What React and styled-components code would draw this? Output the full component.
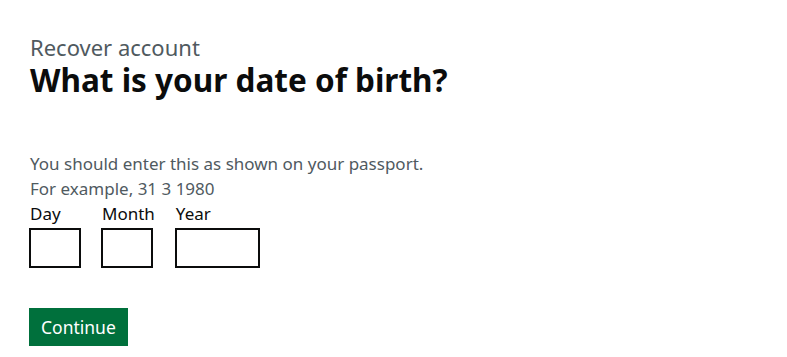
import React from "react";
import styled, { createGlobalStyle } from "styled-components";

const GlobalStyle = createGlobalStyle`
  * {
    box-sizing: border-box;
  }
  body {
    margin: 0;
    background: #ffffff;
    font-family: "Noto Sans", "Liberation Sans", Arial, sans-serif;
    color: #0b0c0c;
  }
`;

const Page = styled.main`
  padding: 34px 30px 0 29px;
`;

const Caption = styled.span`
  display: block;
  padding-left: 1px;
  font-size: 22px;
  line-height: 26px;
  color: #505a5f;
`;

const Heading = styled.h1`
  margin: 0 0 51px 1px;
  font-size: 31.5px;
  line-height: 40px;
  font-weight: 700;
  color: #0b0c0c;
`;

const Hint = styled.div`
  padding-left: 1px;
  font-size: 17px;
  line-height: 25px;
  color: #505a5f;
`;

const DateRow = styled.div`
  display: flex;
  gap: 20px;
`;

const Item = styled.div`
  display: flex;
  flex-direction: column;
`;

const Label = styled.label`
  padding-left: 1px;
  font-size: 17px;
  line-height: 25px;
  margin-bottom: 2px;
  color: #0b0c0c;
`;

const Input = styled.input`
  width: ${(props) => props.$width}px;
  height: 40px;
  margin: 0;
  padding: 5px;
  border: 2px solid #0b0c0c;
  border-radius: 0;
  font: inherit;
  font-size: 19px;
  background: #ffffff;
`;

const Button = styled.button`
  margin-top: 40px;
  padding: 8px 10px 7px;
  border: 2px solid transparent;
  border-radius: 0;
  background-color: #00703c;
  box-shadow: 0 2px 0 #002d18;
  color: #ffffff;
  font-family: inherit;
  font-size: 17.5px;
  line-height: 19px;
  cursor: pointer;
`;

const fields = [
  { id: "day", label: "Day", width: 52 },
  { id: "month", label: "Month", width: 52 },
  { id: "year", label: "Year", width: 85 },
];

export default function App() {
  return (
    <>
      <GlobalStyle />
      <Page>
        <Caption>Recover account</Caption>
        <Heading>What is your date of birth?</Heading>
        <Hint>
          You should enter this as shown on your passport.
          <br />
          For example, 31 3 1980
        </Hint>
        <DateRow>
          {fields.map((f) => (
            <Item key={f.id}>
              <Label htmlFor={f.id}>{f.label}</Label>
              <Input id={f.id} type="text" inputMode="numeric" $width={f.width} />
            </Item>
          ))}
        </DateRow>
        <Button type="button">Continue</Button>
      </Page>
    </>
  );
}
